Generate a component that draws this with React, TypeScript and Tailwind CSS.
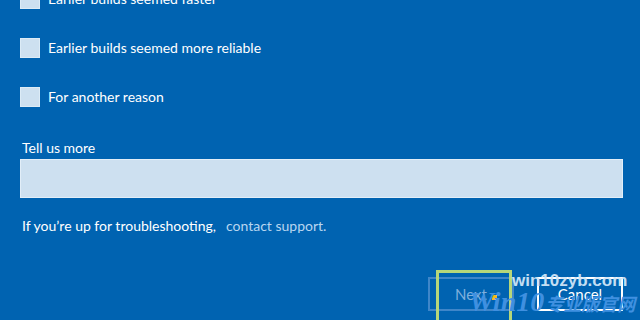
import React from "react";

const font = { fontFamily: 'Lato, "Noto Sans", sans-serif' };

function Check({ label }: { label: string }) {
  return (
    <div className="flex items-center gap-[8px]">
      <div className="w-[20px] h-[20px] bg-[#cde0f0] border border-[#dcebf6] shrink-0" />
      <span className="text-[14px] leading-[20px] text-white">{label}</span>
    </div>
  );
}

export default function App() {
  return (
    <div className="relative w-[640px] h-[320px] bg-[#0063b1] overflow-hidden" style={font}>
      <div className="flex flex-col pl-[20px] pr-[17px]">
        <div className="mt-[-11px]">
          <Check label="Earlier builds seemed faster" />
        </div>
        <div className="mt-[29px]">
          <Check label="Earlier builds seemed more reliable" />
        </div>
        <div className="mt-[29px]">
          <Check label="For another reason" />
        </div>
        <div className="mt-[31px] pl-[2px] text-[14px] leading-[20px] text-white">Tell us more</div>
        <div className="mt-[1px] h-[39px] bg-[#cde0f0] border border-[#e2eef8]" />
        <div className="mt-[18px] pl-[2px] text-[14px] leading-[20px] text-white flex">
          <span>If you’re up for troubleshooting,</span>
          <span className="ml-[10px] text-[#b8d6f0]">contact support.</span>
        </div>
        <div className="mt-[41px] flex justify-end gap-[23px]">
          <div className="w-[86px] h-[34px] border-2 border-[#3f86c9] flex items-center justify-center text-[15px] text-[#7fb0dd]">
            Next
          </div>
          <div className="w-[86px] h-[34px] border-2 border-white flex items-center justify-center text-[15px] text-white">
            Cancel
          </div>
        </div>
      </div>
      {/* watermark */}
      <div className="absolute left-[436px] top-[270px] w-[76px] h-[56px] border-[3px] border-[#b6d77a]" />
      <div className="absolute left-[492px] top-[295px] w-[5px] h-[5px] bg-[#f6b91a]" />
      <div
        className="absolute left-[512px] top-[271px] text-[17px] leading-[20px] font-bold text-[#cfe5f7] opacity-95"
        style={{ fontFamily: '"Liberation Sans", sans-serif' }}
      >
        win10zyb.com
      </div>
      <div className="absolute left-[469px] top-[287px] flex items-baseline text-[#3f90e0]">
        <span
          className="text-[28px] leading-[30px] italic font-bold"
          style={{ fontFamily: '"Liberation Serif", serif' }}
        >
          Win10
        </span>
        <span
          className="ml-[1px] text-[18px] leading-[22px] font-bold italic"
          style={{ fontFamily: '"Noto Sans CJK SC", sans-serif' }}
        >
          专业版官网
        </span>
      </div>
    </div>
  );
}
